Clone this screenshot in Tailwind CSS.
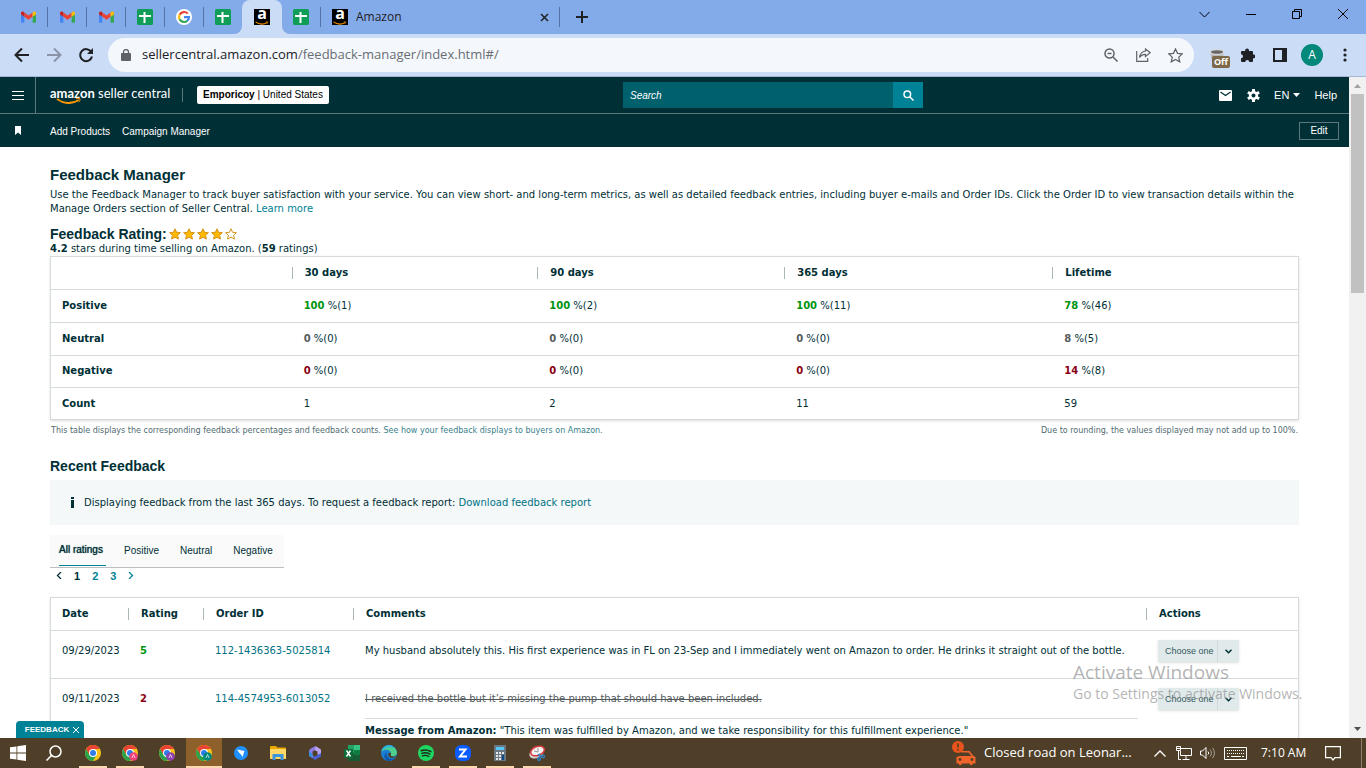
<!DOCTYPE html>
<html lang="en">
<head>
    <title>Amazon</title>
    <meta charset="UTF-8">
    <meta name="viewport" content="width=device-width, initial-scale=1.0">
    <script src="https://cdn.jsdelivr.net/npm/@tailwindcss/browser@4"></script>
</head>
<body class="bg-white">
<!-- Shared icons -->
<svg class="hidden">
    <symbol id="gmail" viewBox="0 0 16 12">
        <path fill="#4285f4" d="M1 12h2.6V5.6L0 3v8a1 1 0 0 0 1 1z"/>
        <path fill="#34a853" d="M12.4 12H15a1 1 0 0 0 1-1V3l-3.600 2.600z"/>
        <path fill="#ea4335" d="M3.600 5.600V1.200L8 4.500l4.400-3.300v4.400L8 8.900z"/>
        <path fill="#c5221f" d="M0 1.800V3.200l3.600 2.600V1.200l-.9-.7C1.600-.3 0 .4 0 1.800z"/>
        <path fill="#fbbc04" d="M12.400 1.200v4.500L16 3.200V1.800c0-1.400-1.600-2.100-2.700-1.300z"/>
    </symbol>
    <symbol id="sheets" viewBox="0 0 16 16">
        <rect width="16" height="16" rx="1.500" fill="#0f9d58"/>
        <path fill="#fff" d="M6.500 3h2v3H14v2H8.500v6h-2V8H2V6h4.500z"/>
    </symbol>
    <symbol id="google" viewBox="0 0 16 16">
        <circle cx="8" cy="8" r="8" fill="#fff"/>
        <g fill="none" stroke-width="2.200">
            <path stroke="#ea4335" d="M11.700 4.600A5 5 0 0 0 3.600 5.700"/>
            <path stroke="#fbbc05" d="M3.700 5.500a5 5 0 0 0 0 5"/>
            <path stroke="#34a853" d="M3.600 10.300a5 5 0 0 0 7.700 1.500"/>
            <path stroke="#4285f4" d="M8 8.200h5a5 5 0 0 1-1.900 3.700"/>
        </g>
    </symbol>
    <symbol id="smile" viewBox="0 0 26 6">
        <path d="M1 1c7 5 15 5 22 1" fill="none" stroke="#f79400" stroke-width="2"/>
        <path d="M20 .8c1.500-.5 3-.5 4 0 .2 1.200-.4 2.500-1.300 3.500" fill="none" stroke="#f79400"/>
    </symbol>
    <symbol id="chrome" viewBox="0 0 16 16">
        <circle cx="8" cy="8" r="8" fill="#fbc116"/>
        <path fill="#ea4335" d="M8 4h6.900A8 8 0 0 0 1.100 4l3.400 5.900z"/>
        <path fill="#2ba24c" d="M1.100 4A8 8 0 0 0 8 16l3.500-6-3.500 2-3.500-2z"/>
        <circle cx="8" cy="8" r="4" fill="#fff"/>
        <circle cx="8" cy="8" r="3" fill="#2f7de9"/>
    </symbol>
    <symbol id="star" viewBox="0 0 12 12">
        <path d="M6 .8l1.600 3.500 3.800.4-2.800 2.600.8 3.800L6 9.200l-3.400 1.900.8-3.800L.6 4.700l3.800-.4z"/>
    </symbol>
</svg>

<div class="h-screen flex flex-col overflow-hidden">

    <!-- Browser tabs -->
    <div class="h-[34px] shrink-0 bg-[#84abe9] flex items-center pl-[9px] text-[#202124]">
        <div class="w-[39px] h-5 border-r border-[#5573a3] flex items-center justify-center"><svg class="w-[15px] h-3"><use href="#gmail"/></svg></div>
        <div class="w-[39px] h-5 border-r border-[#5573a3] flex items-center justify-center"><svg class="w-[15px] h-3"><use href="#gmail"/></svg></div>
        <div class="w-[39px] h-5 border-r border-[#5573a3] flex items-center justify-center"><svg class="w-[15px] h-3"><use href="#gmail"/></svg></div>
        <div class="w-[39px] h-5 border-r border-[#5573a3] flex items-center justify-center"><svg class="size-4"><use href="#sheets"/></svg></div>
        <div class="w-[39px] h-5 border-r border-[#5573a3] flex items-center justify-center"><svg class="size-4"><use href="#google"/></svg></div>
        <div class="w-[38px] h-5 flex items-center justify-center"><svg class="size-4"><use href="#sheets"/></svg></div>
        <div class="relative w-10 h-full bg-[#cbdcf7] rounded-t-lg flex items-center justify-center">
            <svg class="absolute bottom-0 -left-2 size-2" viewBox="0 0 8 8"><path d="M8 0v8H0a8 8 0 0 0 8-8z" fill="#cbdcf7"/></svg>
            <svg class="absolute bottom-0 -right-2 size-2" viewBox="0 0 8 8"><path d="M0 0v8h8a8 8 0 0 1-8-8z" fill="#cbdcf7"/></svg>
            <span class="relative size-4 bg-black text-white text-center font-['Open_Sans',sans-serif] font-bold text-base leading-[9px]">a<svg class="absolute left-px bottom-0 w-[14px] h-1"><use href="#smile"/></svg></span>
        </div>
        <div class="w-[39px] h-5 border-r border-[#5573a3] flex items-center justify-center"><svg class="size-4"><use href="#sheets"/></svg></div>
        <div class="w-[239px] h-5 border-r border-[#5573a3] flex items-center pl-[11px] pr-[10px] gap-2">
            <span class="relative size-4 bg-black text-white text-center font-['Open_Sans',sans-serif] font-bold text-base leading-[9px]">a<svg class="absolute left-px bottom-0 w-[14px] h-1"><use href="#smile"/></svg></span>
            <span class="flex-1 font-['Open_Sans',sans-serif] text-xs">Amazon</span>
            <button aria-label="Close tab"><svg class="size-[9px]" viewBox="0 0 9 9" stroke="#202124" stroke-width="1.500"><path d="M1 1l7 7M8 1 1 8"/></svg></button>
        </div>
        <button aria-label="New tab" class="ml-4"><svg class="size-3" viewBox="0 0 12 12" stroke="#202124" stroke-width="2"><path d="M6 0v12M0 6h12"/></svg></button>
        <div class="ml-auto flex items-center gap-9 pr-[18px] pb-[6px]">
            <button aria-label="Search tabs"><svg class="size-[11px]" viewBox="0 0 11 11" fill="none" stroke="#000"><path d="M.5 3l5 5 5-5"/></svg></button>
            <button aria-label="Minimize"><svg class="size-[10px]" viewBox="0 0 10 10" stroke="#000"><path d="M0 5.500h10"/></svg></button>
            <button aria-label="Restore"><svg class="size-[10px]" viewBox="0 0 10 10" fill="none" stroke="#000"><path d="M.5 2.500h7v7h-7zM2.500 2V.5h7v7H8"/></svg></button>
            <button aria-label="Close"><svg class="size-[10px]" viewBox="0 0 10 10" stroke="#000"><path d="M0 0l10 10M10 0 0 10"/></svg></button>
        </div>
    </div>

    <!-- Address bar -->
    <div class="h-[43px] shrink-0 bg-[#cbdcf7] border-b border-[#a7b6d4] flex items-center pl-[14px] pr-[19px]">
        <button aria-label="Back"><svg class="size-4" viewBox="0 0 16 16" fill="none" stroke="#202124" stroke-width="2"><path d="M15 8H2M8 1.500 1.500 8 8 14.500"/></svg></button>
        <button aria-label="Forward" class="ml-4"><svg class="size-4" viewBox="0 0 16 16" fill="none" stroke="#8a94a6" stroke-width="2"><path d="M1 8h13M8 1.500 14.500 8 8 14.500"/></svg></button>
        <button aria-label="Reload" class="ml-4"><svg class="size-4" viewBox="0 0 16 16" fill="none"><path d="M13.300 5A6 6 0 1 0 14 9.500" stroke="#202124" stroke-width="2"/><path d="M15 1v6H9z" fill="#202124"/></svg></button>
        <div class="ml-[14px] flex-1 h-[34px] rounded-full bg-[#f4f8fd] flex items-center pl-[13px] pr-[11px]">
            <svg class="w-[10px] h-3" viewBox="0 0 10 12"><path d="M1 4h8a1 1 0 0 1 1 1v6a1 1 0 0 1-1 1H1a1 1 0 0 1-1-1V5a1 1 0 0 1 1-1z" fill="#5f6368"/><path d="M2.500 5V3a2.500 2.500 0 0 1 5 0v2" fill="none" stroke="#5f6368" stroke-width="1.300"/></svg>
            <span class="ml-[11px] flex-1 font-['Open_Sans',sans-serif] text-[13px] text-[#6a6e73]"><span class="text-[#202124]">sellercentral.amazon.com</span>/feedback-manager/index.html#/</span>
            <button aria-label="Zoom"><svg class="size-[14px]" viewBox="0 0 14 14" fill="none" stroke="#5f6368" stroke-width="1.500"><circle cx="5.500" cy="5.500" r="4.500"/><path d="M9 9l4.500 4.500M3.500 5.500h4"/></svg></button>
            <button aria-label="Share" class="ml-[18px]"><svg class="w-[15px] h-[14px]" viewBox="0 0 15 14" fill="none" stroke="#5f6368" stroke-width="1.200"><path d="M.7 3v10.300h11V10"/><path d="M9.500 1l4.700 3.700-4.700 3.700V6.300C6.500 6.300 4.800 7.500 3.500 9.500 4 6 6 3.500 9.500 3z"/></svg></button>
            <button aria-label="Bookmark" class="ml-[17px]"><svg class="size-[15px]" viewBox="0 0 12 12" fill="none" stroke="#5f6368"><use href="#star"/></svg></button>
        </div>
        <span class="ml-[15px] relative w-5 h-6">
            <svg class="absolute top-[6px] left-0 w-4 h-3" viewBox="0 0 16 12"><path d="M1 3h14l-2 9H3z" fill="#b9b9b9"/><ellipse cx="8" cy="3" rx="8" ry="3" fill="#d9d9d9"/><ellipse cx="8" cy="3" rx="6" ry="1.700" fill="#666"/></svg>
            <span class="absolute left-[3px] top-[13px] h-3 w-[18px] rounded-xs bg-[#7d6848] text-white font-['Open_Sans',sans-serif] font-bold text-[9px] leading-3 text-center">Off</span>
        </span>
        <button aria-label="Extensions" class="ml-3"><svg class="size-[14px]" viewBox="0 0 14 14" fill="#202124"><path d="M1 3h3.300a1.900 1.900 0 1 1 3.600 0H11a1 1 0 0 1 1 1v2.600a1.900 1.900 0 1 1 0 3.600V13a1 1 0 0 1-1 1H8.300a2 2 0 0 0-4 0H1a1 1 0 0 1-1-1v-2.800a2 2 0 0 0 0-4V4a1 1 0 0 1 1-1z"/></svg></button>
        <button aria-label="Side panel" class="ml-[18px]"><svg class="size-[14px]" viewBox="0 0 14 14"><path d="M1 1h12v12H1z" fill="none" stroke="#202124" stroke-width="2"/><path d="M9 1h4v12H9z" fill="#202124"/></svg></button>
        <button class="ml-[14px] size-[22px] rounded-full bg-[#00897b] text-white font-['Open_Sans',sans-serif] text-xs">A</button>
        <button aria-label="Menu" class="ml-5"><svg class="w-1 h-[14px]" viewBox="0 0 4 14" fill="#202124"><circle cx="2" cy="2" r="1.600"/><circle cx="2" cy="7" r="1.600"/><circle cx="2" cy="12" r="1.600"/></svg></button>
    </div>

    <div class="flex-1 min-h-0 flex relative">
        <div class="flex-1 min-w-0 overflow-hidden font-['DejaVu_Sans',sans-serif] text-[10px] leading-[14px] text-[#002f36]">

            <!-- Seller Central header -->
            <header class="bg-[#002f36] text-white font-['Liberation_Sans',sans-serif]">
                <div class="h-[37px] border-b border-[#5c777b] flex items-center">
                    <div class="flex-1 h-full flex items-center">
                        <button aria-label="Open menu" class="w-9 h-full border-r border-[#5c777b] flex items-center justify-center"><svg class="w-3 h-[9px]" viewBox="0 0 12 9" fill="#fff"><path d="M0 0h12v1H0zM0 4h12v1H0zM0 8h12v1H0z"/></svg></button>
                        <a href="#" class="relative ml-[14px] w-[120px] whitespace-nowrap font-['Lato',sans-serif] text-[13px] leading-4 pb-1"><b>amazon</b> seller central<svg class="absolute left-[6px] top-[13px] w-[26px] h-[6px]"><use href="#smile"/></svg></a>
                        <span class="ml-3 h-[14px] border-l border-[#5c777b]"></span>
                        <button class="ml-[14px] h-[18px] px-[6px] bg-white rounded-xs text-black whitespace-nowrap"><b>Emporicoy</b> | United States</button>
                    </div>
                    <form class="w-[300px] h-[26px] flex">
                        <input type="text" aria-label="Search" placeholder="Search" class="flex-1 min-w-0 bg-[#00606c] px-[7px] pt-px italic placeholder:text-white">
                        <button type="button" aria-label="Submit search" class="w-[30px] bg-[#008296] flex items-center justify-center"><svg class="size-[11px]" viewBox="0 0 11 11" fill="none" stroke="#fff" stroke-width="1.500"><circle cx="4.300" cy="4.300" r="3.300"/><path d="M6.800 6.800l3.700 3.700"/></svg></button>
                    </form>
                    <div class="w-[426px] flex items-center justify-end pr-3 text-[11px]">
                        <a href="#" aria-label="Messages"><svg class="w-[13px] h-[11px]" viewBox="0 0 13 11"><rect width="13" height="11" rx="1" fill="#fff"/><path d="M1.500 2l5 3.500 5-3.500" fill="none" stroke="#002f36" stroke-width="1.200"/></svg></a>
                        <a href="#" aria-label="Settings" class="ml-[15px]"><svg class="size-[13px]" viewBox="0 0 13 13"><path d="M6.500 0v13M.9 3.200l11.200 6.600M.9 9.800l11.200-6.600" stroke="#fff" stroke-width="3"/><circle cx="6.500" cy="6.500" r="4.600" fill="#fff"/><circle cx="6.500" cy="6.500" r="2" fill="#002f36"/></svg></a>
                        <button class="ml-[14px] flex items-center gap-1">EN <svg class="w-[7px] h-1" viewBox="0 0 7 4" fill="#fff"><path d="M0 0h7L3.500 4z"/></svg></button>
                        <a href="#" class="ml-[14px]">Help</a>
                    </div>
                </div>
                <nav class="h-[33px] flex items-center pl-[15px] pr-[10px]">
                    <svg class="w-[6px] h-[9px]" viewBox="0 0 6 9" fill="#fff"><path d="M0 0h6v9L3 6.500 0 9z"/></svg>
                    <a href="#" class="ml-[29px] pt-[2px]">Add Products</a>
                    <a href="#" class="ml-3 pt-[2px]">Campaign Manager</a>
                    <button class="ml-auto w-10 h-[18px] border border-[#5c777b]">Edit</button>
                </nav>
            </header>

            <main class="px-[50px] pt-[18px]">
                <h1 class="font-['Liberation_Sans',sans-serif] font-bold text-[15px] leading-5">Feedback Manager</h1>
                <p class="mt-[3px]">Use the Feedback Manager to track buyer satisfaction with your service. You can view short- and long-term metrics, as well as detailed feedback entries, including buyer e-mails and Order IDs. Click the Order ID to view transaction details within the Manage Orders section of Seller Central. <a href="#" class="text-[#008296]">Learn more</a></p>

                <div class="mt-[10px] flex items-center gap-[2px]">
                    <h2 class="font-['Liberation_Sans',sans-serif] font-bold text-[14px] leading-4">Feedback Rating:</h2>
                    <svg class="size-3 fill-[#ffb900] stroke-[#d59219]"><use href="#star"/></svg>
                    <svg class="size-3 fill-[#ffb900] stroke-[#d59219]"><use href="#star"/></svg>
                    <svg class="size-3 fill-[#ffb900] stroke-[#d59219]"><use href="#star"/></svg>
                    <svg class="size-3 fill-[#ffb900] stroke-[#d59219]"><use href="#star"/></svg>
                    <svg class="size-3 fill-white stroke-[#d59219]"><use href="#star"/></svg>
                </div>
                <p>
                    <b>4.2</b> stars during time selling on Amazon. (<b>59</b> ratings)
                </p>

                <!-- Feedback summary -->
                <div class="border border-[#d5dbdb] shadow-sm">
                    <table class="w-full h-[162px] table-fixed border-separate border-spacing-0 text-left [&_td]:border-b [&_td]:border-[#d5dbdb] [&_td]:pl-3 [&_th]:border-b [&_th]:border-[#d5dbdb] [&_tbody_tr:last-child>*]:border-b-0">
                        <colgroup><col class="w-[19.3%]"><col class="w-[19.7%]"><col class="w-[19.8%]"><col class="w-[21.5%]"><col></colgroup>
                        <thead>
                            <tr class="h-[33px]">
                                <td></td>
                                <th><div class="border-l border-[#aab7b8] h-3 leading-3 pl-3">30 days</div></th>
                                <th><div class="border-l border-[#aab7b8] h-3 leading-3 pl-3">90 days</div></th>
                                <th><div class="border-l border-[#aab7b8] h-3 leading-3 pl-3">365 days</div></th>
                                <th><div class="border-l border-[#aab7b8] h-3 leading-3 pl-3">Lifetime</div></th>
                            </tr>
                        </thead>
                        <tbody>
                            <tr>
                                <th class="pl-[11px]">Positive</th>
                                <td><b class="text-[#009411]">100</b> %(1)</td>
                                <td><b class="text-[#009411]">100</b> %(2)</td>
                                <td><b class="text-[#009411]">100</b> %(11)</td>
                                <td><b class="text-[#009411]">78</b> %(46)</td>
                            </tr>
                            <tr>
                                <th class="pl-[11px]">Neutral</th>
                                <td><b class="text-[#545b5d]">0</b> %(0)</td>
                                <td><b class="text-[#545b5d]">0</b> %(0)</td>
                                <td><b class="text-[#545b5d]">0</b> %(0)</td>
                                <td><b class="text-[#545b5d]">8</b> %(5)</td>
                            </tr>
                            <tr>
                                <th class="pl-[11px]">Negative</th>
                                <td><b class="text-[#8a0012]">0</b> %(0)</td>
                                <td><b class="text-[#8a0012]">0</b> %(0)</td>
                                <td><b class="text-[#8a0012]">0</b> %(0)</td>
                                <td><b class="text-[#8a0012]">14</b> %(8)</td>
                            </tr>
                            <tr>
                                <th class="pl-[11px]">Count</th>
                                <td>1</td>
                                <td>2</td>
                                <td>11</td>
                                <td>59</td>
                            </tr>
                        </tbody>
                    </table>
                </div>
                <div class="mt-[5px] px-px flex justify-between text-[8px] leading-3 text-[#4f6a70]">
                    <p>This table displays the corresponding feedback percentages and feedback counts. <a href="#" class="text-[#39808c]">See how your feedback displays to buyers on Amazon.</a></p>
                    <p>Due to rounding, the values displayed may not add up to 100%.</p>
                </div>

                <h2 class="mt-[21px] font-['Liberation_Sans',sans-serif] font-bold text-[14px] leading-4">Recent Feedback</h2>
                <div class="mt-[6px] h-[45px] bg-[#f4f8f9] flex items-center pl-[21px]">
                    <svg class="w-[3px] h-[11px]" viewBox="0 0 3 11" fill="#002f36"><path d="M0 0h3v2H0zM0 3h3v8H0z"/></svg>
                    <p class="ml-[10px]">Displaying feedback from the last 365 days. To request a feedback report: <a href="#" class="text-[#007285]">Download feedback report</a></p>
                </div>

                <div class="mt-[10px] w-[234px] h-[33px] bg-[#fafafa] border-b border-[#bbbfbf] flex items-stretch pl-[9px] font-['Liberation_Sans',sans-serif]">
                    <button class="w-[47px] mb-px border-b border-[#008296] text-left whitespace-nowrap [text-shadow:0_0_1px_#002f36]">All ratings</button>
                    <button class="ml-[18px]">Positive</button>
                    <button class="ml-[21px]">Neutral</button>
                    <button class="ml-[21px]">Negative</button>
                </div>
                <nav class="h-[15px] flex items-center gap-3 pl-[6px] font-['Liberation_Sans',sans-serif] font-bold text-[11px] text-[#008296]">
                    <button aria-label="Previous page"><svg class="w-[6px] h-[7px]" viewBox="0 0 6 7" fill="none" stroke="#002f36" stroke-width="1.300"><path d="M5 0 1.500 3.500 5 7"/></svg></button>
                    <a href="#" class="text-[#002f36]">1</a>
                    <a href="#">2</a>
                    <a href="#">3</a>
                    <button aria-label="Next page"><svg class="w-[6px] h-[7px]" viewBox="0 0 6 7" fill="none" stroke="#008296" stroke-width="1.300"><path d="M1 0l3.500 3.500L1 7"/></svg></button>
                </nav>

                <!-- Recent feedback -->
                <div class="mt-[14px] border border-[#d5dbdb] shadow-sm">
                    <table class="w-full table-fixed border-separate border-spacing-0 text-left [&_td]:align-top [&_td]:border-b [&_td]:border-[#d5dbdb] [&_td]:pl-3 [&_td]:pt-[13px] [&_th]:border-b [&_th]:border-[#d5dbdb]">
                        <colgroup><col class="w-[77px]"><col class="w-[75px]"><col class="w-[150px]"><col><col class="w-[152px]"></colgroup>
                        <thead>
                            <tr class="h-[33px]">
                                <th class="pl-[11px]">Date</th>
                                <th><div class="border-l border-[#aab7b8] h-3 leading-3 pl-3">Rating</div></th>
                                <th><div class="border-l border-[#aab7b8] h-3 leading-3 pl-3">Order ID</div></th>
                                <th><div class="border-l border-[#aab7b8] h-3 leading-3 pl-3">Comments</div></th>
                                <th><div class="border-l border-[#aab7b8] h-3 leading-3 pl-3">Actions</div></th>
                            </tr>
                        </thead>
                        <tbody>
                            <tr class="h-12">
                                <td class="whitespace-nowrap pl-[11px]!">09/29/2023</td>
                                <td class="font-bold text-[#009411]">5</td>
                                <td><a href="#" class="text-[#007285]">112-1436363-5025814</a></td>
                                <td>My husband absolutely this. His first experience was in FL on 23-Sep and I immediately went on Amazon to order. He drinks it straight out of the bottle.</td>
                                <td class="pt-[9px]!">
                                    <div class="relative w-[81px] h-[22px] bg-[#e1eaeb] shadow">
                                        <select aria-label="Action for 112-1436363-5025814" class="appearance-none size-full pl-[7px] font-['Liberation_Sans',sans-serif] text-[9px] text-[#33585e]"><option>Choose one</option></select>
                                        <span class="absolute right-0 top-0 w-[22px] h-full border-l border-[#d0dadb] flex items-center justify-center pointer-events-none"><svg class="w-[7px] h-[5px]" viewBox="0 0 7 5" fill="none" stroke="#002f36" stroke-width="1.500"><path d="M.5.7l3 3 3-3"/></svg></span>
                                    </div>
                                </td>
                            </tr>
                            <tr>
                                <td class="whitespace-nowrap pl-[11px]!">09/11/2023</td>
                                <td class="font-bold text-[#8a0012]">2</td>
                                <td><a href="#" class="text-[#007285]">114-4574953-6013052</a></td>
                                <td class="pr-2">
                                    <p class="line-through text-[#545b5d]">I received the bottle but it’s missing the pump that should have been included.</p>
                                    <p class="mt-3 pt-[5px] border-t border-[#d5dbdb]"><b>Message from Amazon:</b> "This item was fulfilled by Amazon, and we take responsibility for this fulfillment experience."</p>
                                </td>
                                <td class="pt-[9px]!">
                                    <div class="relative w-[81px] h-[22px] bg-[#e1eaeb] shadow">
                                        <select aria-label="Action for 114-4574953-6013052" class="appearance-none size-full pl-[7px] font-['Liberation_Sans',sans-serif] text-[9px] text-[#33585e]"><option>Choose one</option></select>
                                        <span class="absolute right-0 top-0 w-[22px] h-full border-l border-[#d0dadb] flex items-center justify-center pointer-events-none"><svg class="w-[7px] h-[5px]" viewBox="0 0 7 5" fill="none" stroke="#002f36" stroke-width="1.500"><path d="M.5.7l3 3 3-3"/></svg></span>
                                    </div>
                                </td>
                            </tr>
                        </tbody>
                    </table>
                </div>
            </main>
        </div>

        <!-- Scrollbar -->
        <div class="w-[17px] bg-[#f1f1f1] flex flex-col items-center">
            <svg class="w-[17px] h-[17px]" viewBox="0 0 17 17"><path d="M5 11h7L8.500 7z" fill="#a3a3a3"/></svg>
            <div class="w-[13px] h-[199px] bg-[#c1c1c1]"></div>
            <svg class="mt-auto w-[17px] h-[17px]" viewBox="0 0 17 17"><path d="M5 6h7l-3.500 4z" fill="#505050"/></svg>
        </div>

        <button class="absolute left-4 bottom-0 w-[68px] h-[17px] rounded-t bg-[#008296] text-white font-['Liberation_Sans',sans-serif] font-bold text-[8px] flex items-center justify-center gap-1 pl-1">FEEDBACK <svg class="size-[6px]" viewBox="0 0 6 6" stroke="#fff"><path d="M0 0l6 6M6 0 0 6"/></svg></button>

        <!-- Windows activation watermark -->
        <div class="absolute right-[57px] bottom-[34px] w-[236px] whitespace-nowrap pointer-events-none font-['Open_Sans',sans-serif] text-[#8a8a8a]/65">
            <p class="text-[19px] leading-6">Activate Windows</p>
            <p class="text-sm leading-5">Go to Settings to activate Windows.</p>
        </div>
    </div>

    <!-- Taskbar -->
    <footer class="h-[30px] shrink-0 bg-[#4f3f28] text-white font-['Open_Sans',sans-serif] flex items-stretch">
        <button aria-label="Start" class="w-9 flex items-center justify-center"><svg class="size-4" viewBox="0 0 16 16" fill="#fff"><path d="M0 2.300l6.500-.9v6.100H0zM7.300 1.300 16 0v7.500H7.300zM0 8.400h6.500v6.200L0 13.700zM7.300 8.400H16V16l-8.700-1.300z"/></svg></button>
        <button aria-label="Search" class="w-9 flex items-center justify-center"><svg class="size-4" viewBox="0 0 16 16" fill="none" stroke="#fff" stroke-width="1.500"><circle cx="9.500" cy="6.500" r="5.500"/><path d="M5.600 10.400.5 15.500"/></svg></button>
        <button aria-label="Chrome" class="w-7 ml-[7px] mr-1 border-y-2 border-t-transparent border-b-[#fcd8b0] flex items-center justify-center"><svg class="size-4"><use href="#chrome"/></svg></button>
        <button aria-label="Chrome profile 2" class="w-7 ml-[5px] mr-1 border-y-2 border-t-transparent border-b-[#fcd8b0] flex items-center justify-center"><svg class="size-4" viewBox="0 0 16 16"><use href="#chrome"/><circle cx="11.500" cy="11.500" r="4.300" fill="#ec407a"/><path d="M9.900 13l1.600-3.500 1.600 3.500" stroke="#fff" stroke-width=".7" fill="none"/></svg></button>
        <button aria-label="Chrome profile 3" class="w-7 mx-[5px] flex items-center justify-center"><svg class="size-4" viewBox="0 0 16 16"><use href="#chrome"/><circle cx="11.500" cy="11.500" r="4.300" fill="#8e3fae"/><path d="M9.900 13l1.600-3.500 1.600 3.500" stroke="#fff" stroke-width=".7" fill="none"/></svg></button>
        <button aria-label="Chrome profile 4" class="w-9 bg-[#8e602b] border-y-2 border-t-transparent border-b-[#fcd8b0] flex items-center justify-center"><svg class="size-4" viewBox="0 0 16 16"><use href="#chrome"/><circle cx="11.500" cy="11.500" r="4.300" fill="#00897b"/><path d="M9.900 13l1.600-3.500 1.600 3.500" stroke="#fff" stroke-width=".7" fill="none"/></svg></button>
        <button aria-label="Lark" class="w-[37px] flex items-center justify-center"><svg class="size-[14px]" viewBox="0 0 14 14"><circle cx="7" cy="7" r="7" fill="#1e90ff"/><path d="M3 3.500l7.500 1.500L8.500 11 7 8.500 5 6.500z" fill="#fff"/></svg></button>
        <button aria-label="File Explorer" class="w-[37px] flex items-center justify-center"><svg class="w-4 h-[14px]" viewBox="0 0 16 14"><path d="M0 1a1 1 0 0 1 1-1h5l1.500 1.500H15a1 1 0 0 1 1 1V13H0z" fill="#e8a800"/><path d="M0 3h16v10H0z" fill="#ffd766"/><path d="M2.500 14V8h11v6h-3v-3h-5v3z" fill="#3b94e0"/></svg></button>
        <button aria-label="Microsoft 365" class="w-[37px] flex items-center justify-center"><svg class="size-[14px]" viewBox="0 0 14 14"><path d="M7.500 0 2 3 1 4.500v5L4.500 12 6 10.500 4.500 9V5.500L8 3.500z" fill="#8f7be6"/><path d="M7.500 0 13 3.500v6L9.500 8.500V5.500L7 4.500z" fill="#b9a5f0"/><path d="M3.500 11.500 7 14l6-3.500V7L9.500 9 7 10.500z" fill="#4a62d0"/><path d="M1 5v5l3.500 2V8z" fill="#3a8fe0"/></svg></button>
        <button aria-label="Excel" class="w-[37px] flex items-center justify-center"><svg class="size-4" viewBox="0 0 16 16"><path d="M4 0h12v16H4z" fill="#21a366"/><path d="M10 0h6v5h-6z" fill="#33c481"/><path d="M4 8h12v8H4z" fill="#185c37"/><path d="M10 5h6v5h-6z" fill="#107c41"/><path d="M0 4h9v9H0z" fill="#0d6b38"/><path d="M2.500 5.500l4 6M6.500 5.500l-4 6" stroke="#fff" stroke-width="1.400"/></svg></button>
        <button aria-label="Edge" class="w-[37px] flex items-center justify-center">
            <svg class="size-4" viewBox="0 0 16 16">
                <circle cx="8" cy="8" r="8" fill="#1b7fd4"/>
                <path d="M.3 6.500A8 8 0 0 1 16 7.500c0 2.600-2 4-4.300 4-1.700 0-2.400-.8-1.700-1.700C11 6 6 2.500.3 6.500z" fill="#4fd08a"/>
                <path d="M.3 6.500A8 8 0 0 1 8 0c2 0 4 1 4.500 3C9 1.500 4 2.500.3 6.500z" fill="#2fb5e0"/>
                <path d="M10 9.800c-.7.900 0 1.700 1.700 1.700 1.500 0 2.700-.5 3.500-1.300C14.500 12 13 13 11 13c-3 0-4.500-2.500-3.500-4.500C8 7.500 9.500 7.500 10 8.500z" fill="#4f3f28"/>
                <path d="M6 7.500C4.500 11 7 14 10.500 14c1.500 0 2.700-.4 3.700-1A8 8 0 0 1 8 16c-3 0-5-3-4.500-5.500C3.800 9 4.700 8 6 7.500z" fill="#0f56a8"/>
            </svg>
        </button>
        <button aria-label="Spotify" class="w-7 ml-[5px] mr-1 border-y-2 border-t-transparent border-b-[#fcd8b0] flex items-center justify-center"><svg class="size-4" viewBox="0 0 16 16" fill="none" stroke="#1b2b1b" stroke-linecap="round"><circle cx="8" cy="8" r="8" fill="#1ed760" stroke="none"/><path stroke-width="1.700" d="M3.300 5.600c3.200-1 6.700-.6 9.400.9"/><path stroke-width="1.400" d="M3.800 8.300c2.700-.8 5.700-.5 8 .8"/><path stroke-width="1.200" d="M4.200 10.800c2.300-.6 4.700-.4 6.700.7"/></svg></button>
        <button aria-label="Zoom" class="w-7 ml-[5px] mr-1 border-y-2 border-t-transparent border-b-[#fcd8b0] flex items-center justify-center"><svg class="size-4" viewBox="0 0 16 16"><rect width="16" height="16" rx="6" fill="#0b5cff"/><path d="M4 4.500h6.500l-5.500 7H12" fill="none" stroke="#fff" stroke-width="2"/></svg></button>
        <button aria-label="Calculator" class="w-7 ml-[5px] mr-1 border-y-2 border-t-transparent border-b-[#fcd8b0] flex items-center justify-center"><svg class="w-3 h-4" viewBox="0 0 12 16"><path d="M0 0h12v16H0z" fill="#6a7680"/><path d="M2 2h8v3H2z" fill="#55c8f5"/><path d="M2 7h2v2H2zM5 7h2v2H5zM8 7h2v2H8zM2 10h2v2H2zM5 10h2v2H5zM2 13h2v2H2zM5 13h2v2H5z" fill="#e4e8eb"/><path d="M8 10h2v5H8z" fill="#0c4a8a"/></svg></button>
        <button aria-label="Snipping Tool" class="w-7 ml-[5px] mr-1 border-y-2 border-t-transparent border-b-[#fcd8b0] flex items-center justify-center"><svg class="size-4" viewBox="0 0 16 16"><ellipse cx="7.500" cy="8" rx="7.500" ry="5" transform="rotate(-25 7.500 8)" fill="#d9cfcf"/><ellipse cx="8.500" cy="6" rx="7" ry="4.500" transform="rotate(-20 8.500 6)" fill="#f4f4f4" stroke="#d93a3a" stroke-width="1.500"/><path d="M9 3v4l-4-1" stroke="#999" fill="none"/><g fill="none" stroke="#2f86c9" stroke-width="1.300"><circle cx="10" cy="14" r="1.400"/><circle cx="14" cy="11.500" r="1.400"/><path d="M10.500 12.500V8.500M12.500 11 8.500 9.500"/></g></svg></button>

        <div class="ml-auto flex items-center">
            <svg class="w-6 h-6" viewBox="0 0 24 24"><circle cx="6" cy="6" r="6" fill="#e9541d"/><path d="M5.200 2.500h1.600v4H5.200zM5.200 8h1.600v1.500H5.200z" fill="#4f3f28"/><path d="M9.500 10h8l4 5 2 1v6.500h-3V24h-2.500v-1.500H9.500V24H7v-1.500H4.500V16l3-1h12l-3-3.500h-7z" fill="#f0642a"/><circle cx="8" cy="18.500" r="1.400" fill="#4f3f28"/><circle cx="20" cy="18.500" r="1.400" fill="#4f3f28"/></svg>
            <span class="ml-2 w-[151px] text-[13px] whitespace-nowrap">Closed road on Leonar...</span>
            <button aria-label="Show hidden icons" class="ml-[19px]"><svg class="w-3 h-[7px]" viewBox="0 0 12 7" fill="none" stroke="#fff" stroke-width="1.300"><path d="M.5 6.500 6 1l5.500 5.500"/></svg></button>
            <svg class="ml-[10px] w-4 h-[14px]" viewBox="0 0 16 14" fill="none" stroke="#fff"><path d="M5 2.500h10.500v7h-11V5M10 9.500v3.500M6.500 13.500h7M2.500 5v8.500H5M.5.500h4v4h-4zM1 2.500h3"/></svg>
            <svg class="ml-2 w-4 h-3" viewBox="0 0 16 12" fill="none" stroke="#fff"><path d="M.5 4v4h2L6 11.500V.5L2.500 4z"/><path d="M8 4.500a2 2 0 0 1 0 3"/><path d="M10 2.500a5 5 0 0 1 0 7M12.500.800a8 8 0 0 1 0 10.400" stroke="#a59c90"/></svg>
            <svg class="ml-2 w-[23px] h-[13px]" viewBox="0 0 23 13" fill="none" stroke="#fff"><path d="M.5.500h22v12H.5z"/><path d="M3 3.500h17M3 6.500h17" stroke-dasharray="1 1"/><path d="M3 9.500h2M7 9.500h10M18 9.500h2"/></svg>
            <time class="ml-[14px] w-[45px] text-xs whitespace-nowrap">7:10 AM</time>
            <button aria-label="Notifications" class="ml-[19px]"><svg class="w-4 h-[15px]" viewBox="0 0 16 15" fill="none" stroke="#fff" stroke-width="1.200"><path d="M.6.600h14.800v11H10l-2 2.400-2-2.400H.6z"/></svg></button>
            <span class="ml-5 mr-1 h-[30px] border-l border-[#8a7f70]"></span>
        </div>
    </footer>
</div>
</body>
</html>
